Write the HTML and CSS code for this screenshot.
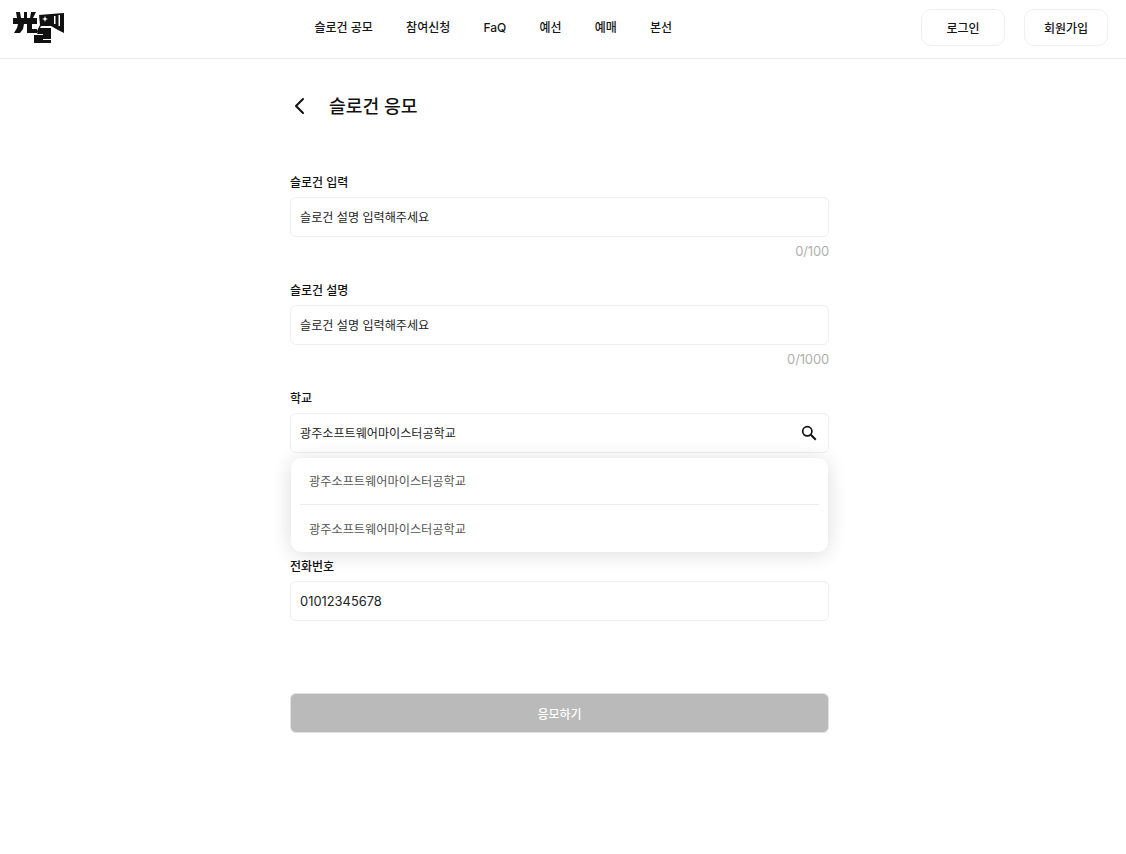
FILE: index.html
```html
<!DOCTYPE html>
<html lang="ko">
<head>
<meta charset="utf-8">
<title>슬로건 응모</title>
<link rel="stylesheet" href="styles.css">
</head>
<body>
<header class="header">
  <a class="logo" aria-label="로고">
    <svg width="51" height="32" viewBox="0 0 51 32" fill="#111">
      <path d="M3 0h4l1 6H4zM11 0h3v6h-3zM18 0h5l-3 6h-3zM0 6h24v6h-5v5h5v4h-10v-9h-3l-1 5-3 4v0H1l3-5 1-4H0z"/>
      <path d="M26 3l12-1v12H28l-3 6-2 1 4-8z"/>
      <path d="M26 16h12v11h-8v1h8v3H21v-8h9v-1h-6z"/>
      <path d="M38 2l13-1v20l-6-3-7-4z"/>
      <path d="M32 4l.8 2.2L35 7l-2.2.8L32 10l-.8-2.2L29 7l2.2-.8zM41 4h1.500v8H41zM45.500 3H47v11h-1.500z" fill="#fff"/>
    </svg>
  </a>
  <nav class="nav">
    <a class="nav-link">슬로건 공모</a>
    <a class="nav-link">참여신청</a>
    <a class="nav-link">FaQ</a>
    <a class="nav-link">예선</a>
    <a class="nav-link">예매</a>
    <a class="nav-link">본선</a>
  </nav>
  <div class="auth">
    <button class="auth-btn">로그인</button>
    <button class="auth-btn">회원가입</button>
  </div>
</header>

<main class="page">
  <div class="title-row">
    <svg class="back" width="20" height="20" viewBox="0 0 20 20" fill="none" stroke="#111" stroke-width="2" stroke-linecap="round" stroke-linejoin="round"><path d="M13 3l-7 7 7 7"/></svg>
    <h1 class="title">슬로건 응모</h1>
  </div>

  <section class="field">
    <label class="label">슬로건 입력</label>
    <div class="input">슬로건 설명 입력해주세요</div>
    <div class="count">0/100</div>
  </section>

  <section class="field">
    <label class="label">슬로건 설명</label>
    <div class="input">슬로건 설명 입력해주세요</div>
    <div class="count">0/1000</div>
  </section>

  <section class="field field-school">
    <label class="label">학교</label>
    <div class="input input-search">
      <span>광주소프트웨어마이스터공학교</span>
      <svg class="search-icon" width="18" height="18" viewBox="0 0 18 18" fill="none" stroke="#111" stroke-width="1.7"><circle cx="7.3" cy="7.3" r="4.6"/><path d="M10.8 10.8l5 5" stroke-width="2"/></svg>
    </div>
    <ul class="dropdown">
      <li class="option">광주소프트웨어마이스터공학교</li>
      <li class="option">광주소프트웨어마이스터공학교</li>
    </ul>
  </section>

  <section class="field">
    <label class="label">전화번호</label>
    <div class="input input-num">01012345678</div>
  </section>

  <button class="submit">응모하기</button>
</main>
</body>
</html>
```

FILE: styles.css
```css
* { box-sizing: border-box; }
html, body { margin: 0; padding: 0; }
body {
  background: #fff;
  color: #111;
  font-family: Inter, "Noto Sans CJK KR", sans-serif;
  height: 854px;
  overflow: hidden;
}
.header {
  height: 59px;
  border-bottom: 1px solid #ebebeb;
  display: flex;
  align-items: center;
  padding: 0 18px 3px 13px;
}
.logo { display: block; height: 32px; margin-top: 1px; }
.nav {
  display: flex;
  gap: 33.2px;
  margin-left: 250.5px;
}
.nav-link {
  font-size: 12px;
  font-weight: 500;
  line-height: 18px;
  color: #161616;
  white-space: nowrap;
}
.auth { display: flex; gap: 19px; margin-left: auto; }
.auth-btn {
  width: 84px;
  height: 37px;
  background: #fff;
  border: 1px solid #efefef;
  border-radius: 10px;
  font: 500 12px Inter, "Noto Sans CJK KR", sans-serif;
  color: #161616;
  padding: 0;
}
.page {
  width: 539px;
  margin: 0 auto 0 290px;
}
.title-row {
  display: flex;
  align-items: center;
  gap: 19px;
  height: 48px;
  margin-top: 23px;
  margin-bottom: 44px;
}
.back { display: block; flex: none; }
.title {
  margin: 0;
  font-size: 18.2px;
  font-weight: 500;
  line-height: 28px;
}
.field { position: relative; margin-bottom: 23px; }
.field-school { margin-bottom: 105px; }
.label {
  display: block;
  font-size: 12px;
  font-weight: 500;
  line-height: 18px;
  margin-bottom: 5px;
}
.input {
  height: 40px;
  border: 1px solid #efefef;
  border-radius: 6px;
  padding: 0 10px 2px 9px;
  display: flex;
  align-items: center;
  font-size: 12.1px;
  color: #222;
}
.input-num { font-size: 12.9px; padding-bottom: 0; }
.input-search { justify-content: space-between; }
.search-icon { margin-top: 2px; }
.count {
  height: 16px;
  margin-top: 6px;
  font-size: 13px;
  letter-spacing: -0.15px;
  line-height: 16px;
  color: #b0b0b0;
  text-align: right;
}
.dropdown {
  position: absolute;
  left: 1px;
  right: 1px;
  top: 68px;
  margin: 0;
  padding: 0 9px;
  list-style: none;
  background: #fff;
  border-radius: 10px;
  box-shadow: 0 2px 20px rgba(0, 0, 0, 0.14);
  height: 94px;
  z-index: 2;
}
.option {
  height: 47px;
  display: flex;
  align-items: center;
  padding-left: 9px;
  font-size: 12.2px;
  color: #555;
}
.option:first-child { height: 46px; }
.option + .option { border-top: 1px solid #ececec; padding-top: 1px; }
.submit {
  display: block;
  width: 100%;
  height: 40px;
  margin-top: 72px;
  border: 1px solid #e2e2e2;
  border-radius: 6px;
  background: #bababa;
  color: #fff;
  font: 500 12px Inter, "Noto Sans CJK KR", sans-serif;
}
```
